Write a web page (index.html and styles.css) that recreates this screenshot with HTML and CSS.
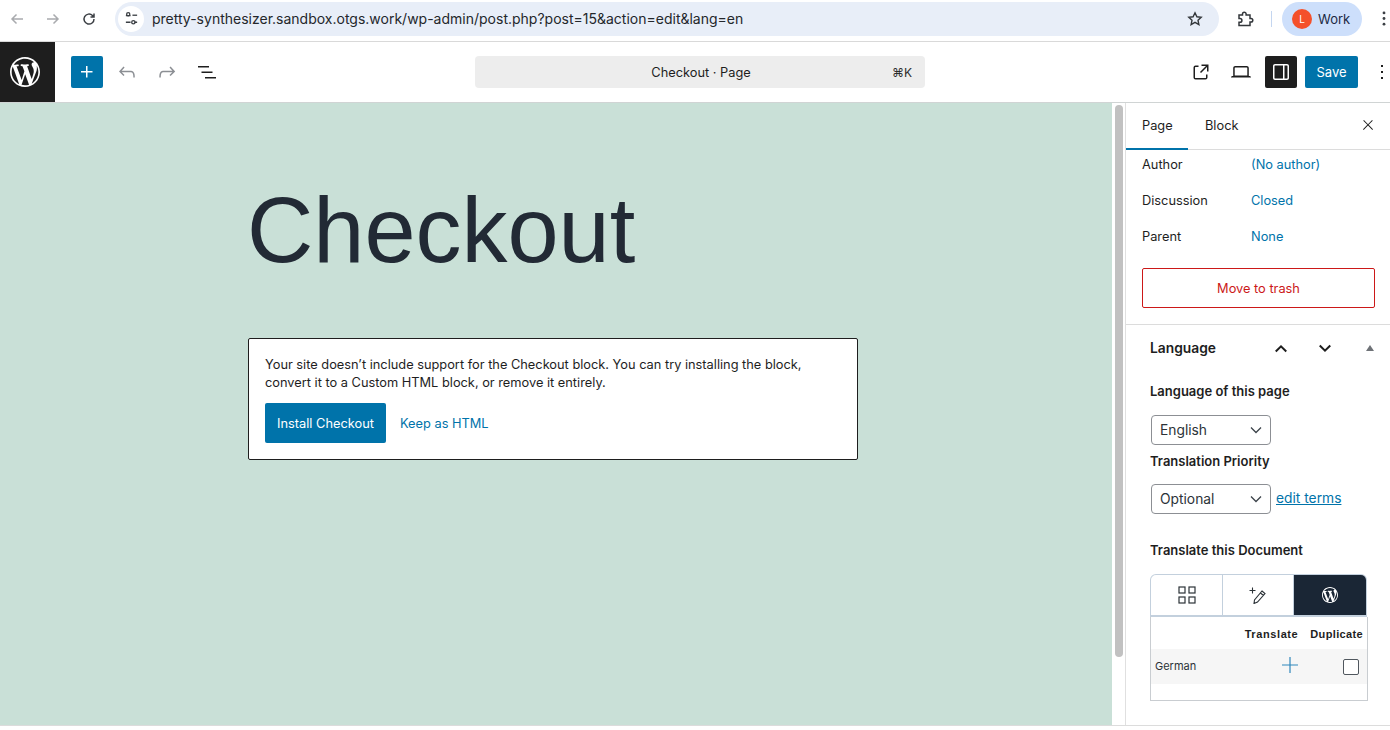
FILE: index.html
```html
<!DOCTYPE html>
<html lang="en">
<head>
<meta charset="utf-8">
<title>Checkout</title>
<link rel="stylesheet" href="styles.css">
</head>
<body>
<header class="chrome">
  <div class="nav">
    <svg class="nav-icon dim" viewBox="0 0 16 16"><path d="M14 8H3M7.5 3.5 3 8l4.5 4.5"/></svg>
    <svg class="nav-icon dim" viewBox="0 0 16 16"><path d="M2 8h11M8.500 3.500 13 8l-4.500 4.500"/></svg>
    <svg class="nav-icon" viewBox="0 0 16 16"><path d="M13 8a5 5 0 1 1-1.500-3.500L13 6M13 2.500V6H9.500"/></svg>
  </div>
  <div class="omnibox">
    <span class="tune"><svg viewBox="0 0 16 16"><path d="M2 5h5M11 12h3M2 12h5"/><circle cx="4.500" cy="4.500" r="1.700" transform="translate(0 -1)"/><circle cx="10" cy="12" r="1.800"/><path d="M9 4.500h5"/></svg></span>
    <span class="url">pretty-synthesizer.sandbox.otgs.work/wp-admin/post.php?post=15&amp;action=edit&amp;lang=en</span>
    <svg class="star" viewBox="0 0 16 16"><path d="m8 1.800 1.900 4 4.300.5-3.200 3 .9 4.300L8 11.400l-3.900 2.200.9-4.300-3.200-3 4.300-.5z"/></svg>
  </div>
  <svg class="ext" viewBox="0 0 18 18"><path d="M3 5h3.500V4a1.800 1.800 0 0 1 3.600 0v1H14v3.500h1a1.800 1.800 0 0 1 0 3.600h-1V15.500H3v-3.200h1a1.900 1.900 0 0 0 0-3.800H3z"/></svg>
  <span class="chrome-sep"></span>
  <div class="profile"><span class="avatar">L</span><span>Work</span></div>
  <svg class="chrome-more" viewBox="0 0 4 16"><circle cx="2" cy="2" r="1.500"/><circle cx="2" cy="8" r="1.500"/><circle cx="2" cy="14" r="1.500"/></svg>
</header>

<div class="toolbar">
  <div class="wp-tile"><svg viewBox="0 0 20 20"><path d="M20 10c0-5.510-4.490-10-10-10C4.480 0 0 4.490 0 10c0 5.520 4.480 10 10 10 5.510 0 10-4.480 10-10zM7.780 15.370L4.370 6.220c.55-.02 1.170-.08 1.170-.08.5-.06.44-1.130-.06-1.110 0 0-1.450.11-2.370.11-.18 0-.37 0-.58-.01C4.120 2.690 6.870 1.110 10 1.110c2.330 0 4.450.87 6.050 2.340-.68-.11-1.650.39-1.650 1.580 0 .74.45 1.360.9 2.100.35.61.55 1.360.55 2.460 0 1.490-1.400 5-1.400 5l-3.030-8.370c.54-.02.82-.17.82-.17.5-.05.44-1.250-.06-1.220 0 0-1.440.12-2.380.12-.87 0-2.330-.12-2.330-.12-.5-.03-.56 1.200-.06 1.220l.92.08 1.260 3.410zM17.410 10c.24-.64.74-1.870.43-4.250.7 1.290 1.050 2.710 1.050 4.250 0 3.290-1.730 6.240-4.400 7.780.97-2.590 1.940-5.200 2.920-7.780zM6.100 18.090C3.120 16.650 1.110 13.530 1.110 10c0-1.300.23-2.480.72-3.590C3.250 10.300 4.670 14.200 6.100 18.090zm4.030-6.630l2.580 6.980c-.86.29-1.760.45-2.710.45-.79 0-1.570-.11-2.290-.33.81-2.380 1.620-4.740 2.420-7.100z"/></svg></div>
  <div class="tools-left">
    <span class="tool-btn primary"><svg viewBox="0 0 24 24"><path d="M11 12.500V17.500H12.500V12.500H17.500V11H12.500V6H11V11H6V12.500H11Z"/></svg></span>
    <span class="tool-btn muted"><svg viewBox="0 0 24 24"><path d="M18.300 11.700c-.6-.6-1.400-.9-2.300-.9H6.700l2.900-3.300-1.100-1-4.500 5L8.500 16l1-1-2.700-2.700H16c.5 0 .9.2 1.300.5 1 1 1 3.400 1 4.500v.3h1.500v-.2c0-1.500 0-4.300-1.500-5.700z"/></svg></span>
    <span class="tool-btn muted"><svg viewBox="0 0 24 24"><path d="M15.600 6.500l-1.100 1 2.900 3.300H8c-.9 0-1.700.3-2.300.9-1.400 1.500-1.400 4.200-1.400 5.600v.2h1.500v-.3c0-1.100 0-3.500 1-4.500.3-.3.7-.5 1.300-.5h9.200L14.500 15l1.100 1.100 4.600-4.600-4.600-5z"/></svg></span>
    <span class="tool-btn"><svg viewBox="0 0 24 24"><path d="M3 6h11v1.500H3V6Zm3.500 5.500h11V13h-11v-1.500ZM21 17H10v1.500h11V17Z"/></svg></span>
  </div>
  <div class="command-wrap">
    <div class="command"><span class="command-title">Checkout · Page</span><span class="shortcut">⌘K</span></div>
  </div>
  <div class="tools-right">
    <span class="tool-btn"><svg viewBox="0 0 24 24"><path d="M19.500 4.500h-7V6h4.440l-5.970 5.970 1.060 1.060L18 7.060v4.440h1.500v-7Zm-13 1a2 2 0 0 0-2 2v10a2 2 0 0 0 2 2h10a2 2 0 0 0 2-2v-3H17v3a.5.5 0 0 1-.5.5h-10a.5.5 0 0 1-.5-.5v-10a.5.5 0 0 1 .5-.5h3V5.500h-3Z"/></svg></span>
    <span class="tool-btn"><svg viewBox="0 0 24 24"><path d="M20.500 16h-.7V8c0-1.100-.9-2-2-2H6.200c-1.100 0-2 .9-2 2v8h-.7c-.8 0-1.500.7-1.500 1.500h20c0-.8-.7-1.500-1.500-1.500zM5.700 8c0-.3.2-.5.5-.5h11.600c.3 0 .5.2.5.5v7.600H5.700V8z"/></svg></span>
    <span class="tool-btn dark"><svg viewBox="0 0 24 24"><path d="M18 4H6c-1.100 0-2 .9-2 2v12c0 1.100.9 2 2 2h12c1.100 0 2-.9 2-2V6c0-1.100-.9-2-2-2zm-4 14.500H6c-.3 0-.5-.2-.5-.5V6c0-.3.2-.5.5-.5h8v13zm4.500-.5c0 .3-.2.5-.5.5h-2.500v-13H18c.3 0 .5.2.5.500v12z"/></svg></span>
    <span class="save">Save</span>
    <span class="more"><svg viewBox="0 0 24 24"><path d="M13 19h-2v-2h2v2zm0-6h-2v-2h2v2zm0-6h-2V5h2v2z"/></svg></span>
  </div>
</div>

<div class="workspace">
  <main class="canvas">
    <h1 class="page-title">Checkout</h1>
    <section class="notice">
      <p>Your site doesn’t include support for the Checkout block. You can try installing the block, convert it to a Custom HTML block, or remove it entirely.</p>
      <div class="notice-actions">
        <span class="install">Install Checkout</span>
        <a class="keep">Keep as HTML</a>
      </div>
    </section>
  </main>
  <div class="scrollbar"><span class="thumb"></span></div>
  <aside class="sidebar">
    <div class="tabs">
      <span class="tab active">Page</span>
      <span class="tab">Block</span>
      <svg class="close" viewBox="0 0 24 24"><path d="M13 11.800l6.100-6.300-1-1-6.100 6.200-6.100-6.200-1 1 6.100 6.300-6.500 6.700 1 1 6.500-6.600 6.500 6.600 1-1z"/></svg>
    </div>
    <div class="meta">
      <div class="meta-row"><span class="meta-key">Author</span><a class="meta-val">(No author)</a></div>
      <div class="meta-row"><span class="meta-key">Discussion</span><a class="meta-val">Closed</a></div>
      <div class="meta-row"><span class="meta-key">Parent</span><a class="meta-val">None</a></div>
      <div class="trash">Move to trash</div>
    </div>
    <div class="lang-panel">
      <div class="lang-head">
        <span class="lang-title">Language</span>
        <svg class="chev up" viewBox="0 0 16 10"><path d="M2 8.500 8 2.500l6 6"/></svg>
        <svg class="chev down" viewBox="0 0 16 10"><path d="M2 1.500l6 6 6-6"/></svg>
        <span class="caret"></span>
      </div>
      <div class="field-label first">Language of this page</div>
      <div class="select"><span>English</span><svg viewBox="0 0 12 8"><path d="M1 1.500l5 5 5-5"/></svg></div>
      <div class="field-label second">Translation Priority</div>
      <div class="select-row">
        <div class="select"><span>Optional</span><svg viewBox="0 0 12 8"><path d="M1 1.500l5 5 5-5"/></svg></div>
        <a class="edit-terms">edit terms</a>
      </div>
      <div class="field-label third">Translate this Document</div>
      <div class="wpml-tabs">
        <span class="wpml-tab"><svg class="grid-i" viewBox="0 0 18 18"><rect x="1" y="1" width="6" height="6"/><rect x="11" y="1" width="6" height="6"/><rect x="1" y="11" width="6" height="6"/><rect x="11" y="11" width="6" height="6"/></svg></span>
        <span class="wpml-tab"><svg class="pen-i" viewBox="0 0 18 18"><path d="M.5 4.500h6M3.500 1.500v6M13 5l3 2.500-7.500 8.500-3.500 1.500.5-3.500zM11.500 7l3 2.500"/></svg></span>
        <span class="wpml-tab on"><svg viewBox="0 0 20 20"><path d="M20 10c0-5.510-4.490-10-10-10C4.480 0 0 4.490 0 10c0 5.520 4.480 10 10 10 5.510 0 10-4.480 10-10zM7.780 15.370L4.370 6.220c.55-.02 1.170-.08 1.170-.08.5-.06.44-1.130-.06-1.110 0 0-1.450.11-2.370.11-.18 0-.37 0-.58-.01C4.120 2.690 6.870 1.110 10 1.110c2.330 0 4.450.87 6.050 2.340-.68-.11-1.650.39-1.650 1.580 0 .74.45 1.360.9 2.100.35.61.55 1.360.55 2.460 0 1.490-1.400 5-1.400 5l-3.030-8.370c.54-.02.82-.17.82-.17.5-.05.44-1.250-.06-1.220 0 0-1.440.12-2.380.12-.87 0-2.330-.12-2.330-.12-.5-.03-.56 1.200-.06 1.220l.92.08 1.260 3.410zM17.410 10c.24-.64.74-1.870.43-4.250.7 1.290 1.050 2.710 1.050 4.250 0 3.290-1.730 6.240-4.400 7.780.97-2.590 1.940-5.200 2.920-7.780zM6.100 18.090C3.120 16.650 1.110 13.530 1.110 10c0-1.300.23-2.480.72-3.590C3.250 10.300 4.670 14.200 6.100 18.090zm4.030-6.630l2.580 6.980c-.86.29-1.760.45-2.710.45-.79 0-1.570-.11-2.290-.33.81-2.380 1.620-4.740 2.420-7.100z"/></svg></span>
      </div>
      <div class="wpml-table">
        <div class="wpml-heads"><span class="th-translate">Translate</span><span>Duplicate</span></div>
        <div class="wpml-row">
          <span class="lang-name">German</span>
          <svg class="add" viewBox="0 0 16 16"><path d="M8 0v16M0 8h16"/></svg>
          <span class="check"></span>
        </div>
      </div>
    </div>
  </aside>
</div>
</body>
</html>
```
FILE: styles.css
```css
* { box-sizing: border-box; }
html, body { margin: 0; height: 730px; overflow: hidden; background: #fff; }
body { font-family: Inter, "Liberation Sans", sans-serif; font-size: 12.800px; color: #1e1e1e; display: flex; flex-direction: column; }
a { color: #0073aa; }

.chrome { height: 42px; flex: none; display: flex; align-items: center; border-bottom: 1px solid #d9d9d9; padding-bottom: 5px; padding-top: 1px; }
.nav { display: flex; align-items: center; width: 115px; padding-left: 9px; gap: 20px; flex: none; }
.nav-icon { width: 16px; height: 16px; fill: none; stroke: #3b3f44; stroke-width: 1.500; }
.nav-icon.dim { stroke: #a9abae; }
.omnibox { width: 1104px; height: 34px; border-radius: 17px; background: #e8eef8; display: flex; align-items: center; padding-left: 3px; padding-right: 16px; flex: none; }
.tune { width: 26px; height: 26px; border-radius: 50%; background: #fff; display: flex; align-items: center; justify-content: center; flex: none; }
.tune svg { width: 15px; height: 15px; fill: none; stroke: #3b3f44; stroke-width: 1.400; }
.url { margin-left: 8px; font-size: 14px; color: #24272b; flex: 1; white-space: nowrap; }
.star { width: 16px; height: 16px; fill: none; stroke: #33373b; stroke-width: 1.400; flex: none; }
.ext { width: 18px; height: 18px; margin-left: 17px; fill: none; stroke: #33373b; stroke-width: 1.500; flex: none; }
.chrome-sep { width: 1px; height: 16px; background: #c4d6f0; margin-left: 17px; flex: none; }
.profile { width: 80px; height: 34px; margin-left: 10px; border-radius: 17px; background: #cddffb; display: flex; align-items: center; padding-left: 10px; gap: 6px; font-size: 13px; color: #1c2a44; flex: none; }
.avatar { width: 20px; height: 20px; border-radius: 50%; background: #f4502a; color: #fff; font-size: 10px; display: flex; align-items: center; justify-content: center; }
.chrome-more { width: 4px; height: 15px; margin-left: 20px; fill: #3b3f44; flex: none; }

.toolbar { height: 61px; flex: none; display: flex; align-items: center; border-bottom: 1px solid #d0d4d4; padding-bottom: 1px; }
.wp-tile { width: 55px; height: 60px; background: #1e1e1e; display: flex; align-items: center; padding-left: 10px; flex: none; }
.wp-tile svg { width: 30px; height: 30px; fill: #fff; }
.tools-left { display: flex; align-items: center; gap: 8px; margin-left: 16px; width: 404px; flex: none; }
.tool-btn { width: 32px; height: 32px; border-radius: 2px; display: flex; align-items: center; justify-content: center; flex: none; }
.tool-btn svg { width: 24px; height: 24px; fill: #1e1e1e; }
.tool-btn.primary { background: #0073aa; }
.tool-btn.primary svg { fill: #fff; }
.tool-btn.muted svg { fill: #8c8f94; }
.tool-btn.dark { background: #1e1e1e; }
.tool-btn.dark svg { fill: #fff; }
.command-wrap { width: 450px; flex: none; }
.command { height: 32px; border-radius: 4px; background: #ededed; display: flex; align-items: center; position: relative; justify-content: center; padding: 1px 0 0 2px; }
.command-title { color: #1e1e1e; }
.shortcut { position: absolute; right: 13px; font-size: 12px; color: #2c2c2c; }
.tools-right { display: flex; align-items: center; gap: 8px; margin-left: 260px; flex: none; }
.save { width: 53px; height: 32px; border-radius: 2px; background: #0073aa; color: #fff; display: flex; align-items: center; justify-content: center; font-size: 13px; }
.more { width: 24px; height: 24px; margin-left: 4px; flex: none; }
.more svg { width: 24px; height: 24px; fill: #1e1e1e; }

.workspace { flex: none; height: 623px; display: flex; border-bottom: 1px solid #dcdcdc; }
.canvas { width: 1112px; flex: none; background: #c9e0d7; padding-left: 248px; }
.page-title { margin: 74px 0 0 -1px; font-family: "Liberation Sans", Arial, sans-serif; font-weight: 400; font-size: 91.900px; line-height: 106px; color: #222a35; }
.notice { width: 610px; height: 122px; margin-top: 55px; border: 1px solid #1e1e1e; border-radius: 2px; background: #fff; padding: 17px 16px 16px; }
.notice p { margin: 0; line-height: 18px; color: #1e1e1e; }
.notice-actions { display: flex; align-items: center; margin-top: 11px; }
.install { width: 121px; height: 40px; border-radius: 2px; background: #0073aa; color: #fff; display: flex; align-items: center; justify-content: center; }
.keep { margin-left: 14px; }

.scrollbar { width: 13px; flex: none; padding: 2px 2px 0 3px; background: #fff; }
.thumb { display: block; width: 8px; height: 552px; border-radius: 4px; background: #c1c1c1; }

.sidebar { width: 265px; flex: none; border-left: 1px solid #e0e0e0; overflow: hidden; }
.tabs { height: 47px; border-bottom: 1px solid #dcdcdc; display: flex; align-items: stretch; padding-bottom: 2px; position: relative; }
.tab { display: flex; align-items: center; padding: 0 16px; width: 62px; }
.tab + .tab { padding-left: 17px; }
.tab.active { box-shadow: inset 0 -2px 0 #0073aa; height: 47px; padding-bottom: 2px; }
.close { position: absolute; right: 14px; top: 14px; width: 16px; height: 16px; fill: #1e1e1e; }
.meta { padding: 0 15px 16px 16px; border-bottom: 1px solid #dcdcdc; }
.meta-row { height: 28px; margin-bottom: 8px; display: flex; align-items: center; }
.meta-key { width: 109px; flex: none; }
.meta-val { color: #0073aa; }
.trash { margin-top: 18px; height: 40px; border: 1px solid #cc1818; border-radius: 2px; color: #cc1818; display: flex; align-items: center; justify-content: center; }

.lang-panel { padding: 0 23px 0 24px; }
.lang-head { display: flex; align-items: center; height: 44px; padding-top: 2px; position: relative; }
.lang-title { font-weight: 600; font-size: 13.800px; width: 124px; margin-right: 0; flex: none; }
.chev { width: 14px; height: 9px; fill: none; stroke: #1e1e1e; stroke-width: 2.300; flex: none; }
.chev.up { margin-left: 0; }
.chev.down { margin-left: 30px; }
.caret { margin-left: 34px; width: 0; height: 0; border-left: 4px solid transparent; border-right: 4px solid transparent; border-bottom: 6px solid #6e7277; }
.field-label { font-weight: 600; font-size: 13px; line-height: 16px; }
.field-label.first { margin-top: 14px; }
.field-label.second { margin-top: 8px; }
.field-label.third { margin-top: 28px; }
.select { width: 120px; height: 30px; margin: 16px 0 0 1px; border: 1px solid #8c8f94; border-radius: 4px; display: flex; align-items: center; justify-content: space-between; padding: 0 8px; font-size: 13.800px; color: #2c3338; flex: none; }
.select svg { width: 12px; height: 8px; fill: none; stroke: #3c434a; stroke-width: 1.300; }
.select-row { display: flex; align-items: flex-end; }
.select-row .select { margin-top: 15px; }
.edit-terms { margin-left: 5px; margin-bottom: 8px; font-size: 13.800px; text-decoration: underline; color: #0073aa; }
.wpml-tabs { width: 217px; height: 43px; margin-top: 16px; display: grid; grid-template-columns: 72px 71px 1fr; border: 1px solid #c3d0dd; border-bottom-width: 2px; border-radius: 6px 6px 0 0; overflow: hidden; }
.wpml-tab { display: flex; align-items: center; justify-content: center; border-right: 1px solid #c3d0dd; }
.wpml-tab.on { background: #1a2635; border-right: 0; }
.wpml-tab svg { width: 16px; height: 16px; fill: #fff; }
.wpml-tab .grid-i { width: 18px; height: 18px; fill: none; stroke: #2c3338; stroke-width: 1.200; }
.wpml-tab .pen-i { width: 18px; height: 18px; fill: none; stroke: #2c3338; stroke-width: 1.100; }
.wpml-table { width: 218px; height: 84px; border: 1px solid #c9cdd1; border-top: 0; }
.wpml-heads { height: 32px; display: flex; align-items: center; justify-content: flex-end; padding-right: 4px; padding-top: 2px; font-size: 11px; font-weight: 700; font-family: "Liberation Sans", Inter, sans-serif; letter-spacing: .35px; gap: 12px; }
.th-translate { letter-spacing: .6px; }
.wpml-row { height: 35px; background: #f6f6f6; display: flex; align-items: center; padding: 0 0 2px 4px; position: relative; }
.lang-name { font-size: 11px; color: #2c3338; }
.add { position: absolute; left: 131px; top: 8px; width: 16px; height: 16px; fill: none; stroke: #2f87bb; stroke-width: 1.200; }
.check { position: absolute; right: 8px; top: 10px; width: 16px; height: 16px; border: 1px solid #50575e; border-radius: 2px; background: #fff; }
```
